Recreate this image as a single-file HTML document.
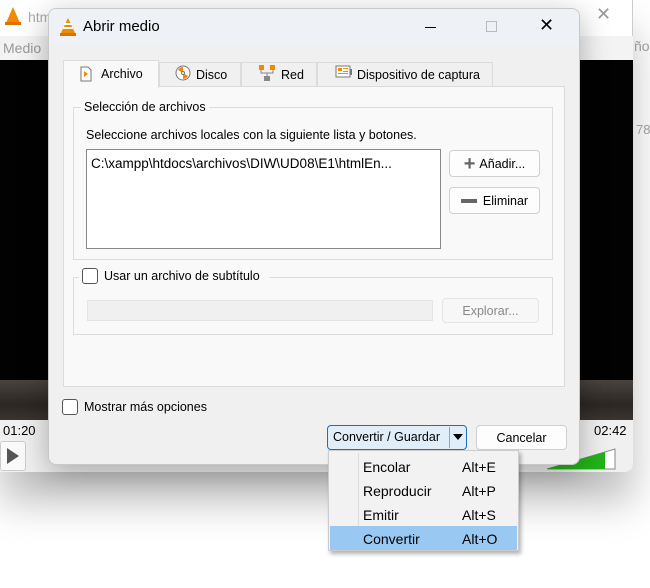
<!DOCTYPE html>
<html><head><meta charset="utf-8"><style>
*{box-sizing:border-box;margin:0;padding:0}
body{width:650px;height:588px;background:#fff;font-family:"Liberation Sans",sans-serif;font-size:12px;color:#000;position:relative;overflow:hidden}
.abs{position:absolute}
.btn{position:absolute;background:#fdfdfd;border:1px solid #d0d0d0;border-radius:4px;font-size:12.5px;display:flex;align-items:center;justify-content:center}
</style></head><body>
<div class="abs" style="left:0;top:0;width:633px;height:472px;background:#fff;border-right:1px solid #ccc;border-bottom:1px solid #bbb;border-radius:0 0 8px 0;box-shadow:0 30px 40px rgba(0,0,0,.25)"></div>
<div class="abs" style="left:0;top:36px;width:633px;height:24px;background:#f3f3f3"></div>
<div class="abs" style="left:3px;top:40px;color:#999;font-size:14px">Medio</div>
<div class="abs" style="left:634px;top:38px;color:#999;font-size:14px">ño</div>
<div class="abs" style="left:636px;top:122px;color:#999;font-size:13px">78</div>
<svg class="abs" style="left:4px;top:6px" width="18" height="20"><polygon points="9,1 16,17 2,17" fill="#f08a00"/><rect x="1" y="16" width="16" height="3" fill="#e07000"/></svg>
<div class="abs" style="left:28px;top:9px;color:#aaa;font-size:14px">htm</div>
<div class="abs" style="left:596px;top:4px;color:#999;font-size:18px">✕</div>
<div class="abs" style="left:0;top:60px;width:633px;height:320px;background:#020202"></div>
<div class="abs" style="left:0;top:380px;width:633px;height:40px;background:linear-gradient(#4a4440,#2c2724 60%,#3a3430)"></div>
<div class="abs" style="left:0;top:420px;width:633px;height:52px;background:#f0f0f0;border-radius:0 0 8px 0"></div>
<div class="abs" style="left:3px;top:423px;font-size:13px">01:20</div>
<div class="abs" style="left:594px;top:423px;font-size:13px">02:42</div>
<div class="abs" style="left:0;top:441px;width:26px;height:30px;background:#fafafa;border:1px solid #ccc;border-radius:3px"></div>
<svg class="abs" style="left:6px;top:447px" width="14" height="18"><polygon points="1,1 13,9 1,17" fill="#555"/></svg>
<svg class="abs" style="left:545px;top:447px" width="80" height="24"><polygon points="2,22 70,2 70,22" fill="#fff" stroke="#888"/><polygon points="2,22 60,5 60,22" fill="#22b318"/></svg>
<div class="abs" style="left:48px;top:8px;width:532px;height:457px;background:#f0f0f0;border:1px solid #c8c8c8;border-radius:8px;box-shadow:0 8px 30px rgba(0,0,0,.3);overflow:hidden">
 <div class="abs" style="left:0;top:0;width:532px;height:36px;background:#eef2f7"></div>
 <svg class="abs" style="left:10px;top:8px" width="18" height="20"><polygon points="9,1 16,16 2,16" fill="#f08a00"/><rect x="5" y="6" width="8" height="2" fill="#fff"/><rect x="4" y="10" width="10" height="2" fill="#fff"/><rect x="1" y="16" width="16" height="3" fill="#e07000"/></svg>
 <div class="abs" style="left:34px;top:9px;font-size:15px">Abrir medio</div>
 <div class="abs" style="left:376px;top:18px;width:11px;height:1px;background:#000"></div>
 <div class="abs" style="left:437px;top:12px;width:11px;height:11px;border:1px solid #bbb"></div>
 <div class="abs" style="left:490px;top:6px;font-size:18px">✕</div>
 <div class="abs" style="left:14px;top:77px;width:502px;height:301px;background:#f9f9f9;border:1px solid #dcdcdc"></div>
 <div class="abs" style="left:14px;top:51px;width:96px;height:28px;background:#f9f9f9;border:1px solid #dcdcdc;border-bottom:none"></div>
 <div class="abs" style="left:110px;top:53px;width:82px;height:24px;background:#f0f0f0;border:1px solid #dcdcdc;border-bottom:none"></div>
 <div class="abs" style="left:192px;top:53px;width:76px;height:24px;background:#f0f0f0;border:1px solid #dcdcdc;border-bottom:none"></div>
 <div class="abs" style="left:268px;top:53px;width:176px;height:24px;background:#f0f0f0;border:1px solid #dcdcdc;border-bottom:none"></div>
 <svg class="abs" style="left:31px;top:57px" width="12" height="16"><path d="M1 1h7l3 3v11H1z" fill="#fff" stroke="#777"/><polygon points="4,5 8,8 4,11" fill="#f08a00"/></svg>
 <div class="abs" style="left:52px;top:58px;font-size:12.5px">Archivo</div>
 <svg class="abs" style="left:126px;top:56px" width="16" height="16"><circle cx="8" cy="8" r="7" fill="#fff" stroke="#777"/><path d="M8 8L3 5A6 6 0 0 1 8 2zM8 8L13 11A6 6 0 0 1 8 14z" fill="#f08a00"/><circle cx="8" cy="8" r="1.5" fill="#fff" stroke="#777"/></svg>
 <div class="abs" style="left:147px;top:59px;font-size:12.5px">Disco</div>
 <svg class="abs" style="left:209px;top:55px" width="18" height="18"><rect x="1" y="1" width="5" height="5" fill="#f08a00"/><rect x="12" y="1" width="5" height="5" fill="#f08a00"/><rect x="6" y="12" width="6" height="5" fill="#888"/><path d="M3 6v3h12V6M9 9v3" stroke="#888" fill="none"/></svg>
 <div class="abs" style="left:232px;top:59px;font-size:12.5px">Red</div>
 <svg class="abs" style="left:286px;top:56px" width="18" height="16"><rect x="1" y="1" width="14" height="11" fill="#fff" stroke="#777"/><rect x="3" y="3" width="4" height="3" fill="#f08a00"/><rect x="8" y="3" width="5" height="1" fill="#f08a00"/><rect x="8" y="6" width="5" height="1" fill="#f08a00"/><rect x="3" y="8" width="10" height="1" fill="#f08a00"/><rect x="15" y="4" width="2" height="6" fill="#777"/></svg>
 <div class="abs" style="left:308px;top:59px;font-size:12.5px">Dispositivo de captura</div>
 <div class="abs" style="left:24px;top:98px;width:480px;height:153px;border:1px solid #dcdcdc"></div>
 <div class="abs" style="left:32px;top:91px;background:#f9f9f9;padding:0 3px;font-size:12.5px">Selección de archivos</div>
 <div class="abs" style="left:37px;top:119px;font-size:12.5px">Seleccione archivos locales con la siguiente lista y botones.</div>
 <div class="abs" style="left:37px;top:140px;width:355px;height:100px;background:#fff;border:1px solid #888"></div>
 <div class="abs" style="left:42px;top:147px;font-size:13.5px">C:\xampp\htdocs\archivos\DIW\UD08\E1\htmlEn...</div>
 <div class="btn" style="left:400px;top:141px;width:91px;height:27px"><span style="font-size:20px;color:#666;font-weight:bold;margin-right:4px;line-height:1">+</span>Añadir...</div>
 <div class="btn" style="left:400px;top:178px;width:91px;height:27px"><span style="display:inline-block;width:16px;height:4px;background:#666;margin-right:6px"></span>Eliminar</div>
 <div class="abs" style="left:24px;top:268px;width:480px;height:58px;border:1px solid #dcdcdc"></div>
 <div class="abs" style="left:30px;top:259px;background:#f9f9f9;height:18px;width:190px"></div>
 <div class="abs" style="left:33px;top:259px;width:16px;height:16px;border:1px solid #555;border-radius:3px;background:#fff"></div>
 <div class="abs" style="left:55px;top:260px;font-size:12.5px">Usar un archivo de subtítulo</div>
 <div class="abs" style="left:38px;top:291px;width:346px;height:21px;background:#f0f0f0;border:1px solid #e4e4e4"></div>
 <div class="btn" style="left:393px;top:289px;width:97px;height:25px;background:#f7f7f7;border-color:#e4e4e4;color:#888">Explorar...</div>
 <div class="abs" style="left:13px;top:390px;width:16px;height:16px;border:1px solid #555;border-radius:3px;background:#fff"></div>
 <div class="abs" style="left:35px;top:391px;font-size:12.5px">Mostrar más opciones</div>
 <div class="abs" style="left:278px;top:416px;width:140px;height:25px;background:#e0eefa;border:1px solid #1a6fc0;border-radius:4px"></div>
 <div class="abs" style="left:284px;top:421px;font-size:12.5px">Convertir / Guardar</div>
 <div class="abs" style="left:400px;top:418px;width:1px;height:21px;background:#8ab"></div>
 <svg class="abs" style="left:404px;top:425px" width="10" height="7"><polygon points="0,0 10,0 5,6" fill="#000"/></svg>
 <div class="btn" style="left:427px;top:416px;width:91px;height:25px">Cancelar</div>
</div>
<div class="abs" style="left:328px;top:450px;width:191px;height:101px;background:#f2f2f2;border:1px solid #ccc;box-shadow:2px 3px 4px rgba(0,0,0,.3)"></div>
<div class="abs" style="left:358px;top:453px;width:1px;height:95px;background:#ddd"></div>
<div class="abs" style="left:330px;top:526px;width:187px;height:24px;background:#99c9f3"></div>
<div class="abs" style="left:363px;top:455px;font-size:14px;line-height:24px">Encolar<br>Reproducir<br>Emitir<br>Convertir</div>
<div class="abs" style="left:462px;top:455px;font-size:14px;line-height:24px">Alt+E<br>Alt+P<br>Alt+S<br>Alt+O</div>
</body></html>
